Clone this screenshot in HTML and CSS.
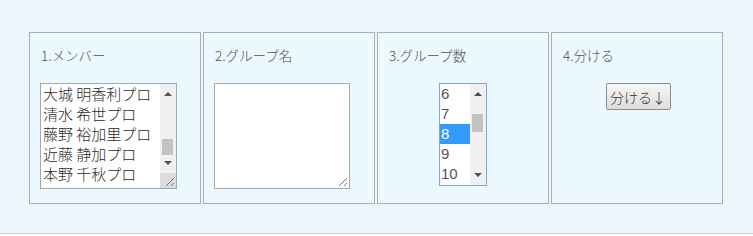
FILE: index.html
```html
<!DOCTYPE html>
<html lang="ja">
<head>
  <meta charset="UTF-8">
  <title>グループ分け</title>
  <link rel="stylesheet" href="styles.css">
</head>
<body>
  <div class="page">
    <div class="steps">
      <div class="step">
        <div class="step-title">1.メンバー</div>
        <div class="listbox members">
          <div class="list-items">
            <div class="item">大城 明香利プロ</div>
            <div class="item">清水 希世プロ</div>
            <div class="item">藤野 裕加里プロ</div>
            <div class="item">近藤 静加プロ</div>
            <div class="item">本野 千秋プロ</div>
          </div>
          <div class="scrollbar">
            <div class="arrow up"></div>
            <div class="track"><div class="thumb thumb-members"></div></div>
            <div class="arrow down"></div>
            <div class="grip"><div class="grip-lines"></div></div>
          </div>
        </div>
      </div>

      <div class="step">
        <div class="step-title">2.グループ名</div>
        <div class="textarea">
          <div class="grip-lines"></div>
        </div>
      </div>

      <div class="step center">
        <div class="step-title">3.グループ数</div>
        <div class="listbox count">
          <div class="list-items">
            <div class="item">6</div>
            <div class="item">7</div>
            <div class="item selected">8</div>
            <div class="item">9</div>
            <div class="item">10</div>
          </div>
          <div class="scrollbar">
            <div class="arrow up"></div>
            <div class="track"><div class="thumb thumb-count"></div></div>
            <div class="arrow down"></div>
          </div>
        </div>
      </div>

      <div class="step center">
        <div class="step-title">4.分ける</div>
        <button class="split-btn">分ける↓</button>
      </div>
    </div>
  </div>
</body>
</html>
```

FILE: styles.css
```css
body {
  margin: 0;
  background: #fff;
  font-family: "Noto Sans CJK JP", "Noto Sans", sans-serif;
  color: #444;
}

.page {
  height: 234px;
  background: #eef6fd;
  border-bottom: 1px solid #c9ced3;
  box-sizing: border-box;
  padding: 32px 29px 0;
}

.steps {
  display: flex;
  gap: 2px;
}

.step {
  width: 172px;
  height: 172px;
  box-sizing: border-box;
  border: 1px solid #a7afb5;
  background: #ebf8ff;
  padding: 13px 10px 0;
  display: flex;
  flex-direction: column;
}

.step.center {
  align-items: center;
}

.step-title {
  align-self: flex-start;
  font-size: 13.5px;
  font-weight: 300;
  line-height: 18px;
  padding-left: 1px;
  margin-bottom: 19px;
  color: #505050;
}

.listbox {
  display: flex;
  background: #fff;
  border: 1px solid #a5a9ad;
  box-sizing: border-box;
}

.members {
  width: 137px;
  height: 106px;
}

.count {
  width: 48px;
  height: 103px;
  border-color: #7ea6d6;
}

.list-items {
  flex: 1;
  overflow: hidden;
}

.item {
  height: 20px;
  line-height: 20px;
  white-space: nowrap;
  color: #333;
}

.members .item {
  font-size: 15px;
  font-weight: 300;
  padding-left: 2px;
  color: #2a2a2a;
}

.count .item {
  font-family: "Liberation Sans", Arial, sans-serif;
  font-size: 15px;
  padding-left: 1px;
  color: #555;
}

.item.selected {
  background: #3399ff;
  color: #fff;
}

.scrollbar {
  width: 16px;
  background: #f0f0f0;
  display: flex;
  flex-direction: column;
  align-items: center;
}

.arrow {
  width: 0;
  height: 0;
  border-left: 4px solid transparent;
  border-right: 4px solid transparent;
}

.arrow.up {
  border-bottom: 4px solid #505050;
  margin-top: 8px;
}

.arrow.down {
  border-top: 4px solid #505050;
  margin-bottom: 8px;
}

.track {
  flex: 1;
  width: 100%;
  position: relative;
}

.thumb {
  position: absolute;
  left: 2px;
  right: 3px;
  background: #c2c2c2;
}

.thumb-members {
  top: 43px;
  height: 16px;
}

.thumb-count {
  top: 18px;
  height: 18px;
}

.grip {
  width: 100%;
  height: 15px;
  background: #dcdcdc;
  position: relative;
}

.textarea {
  width: 136px;
  height: 106px;
  box-sizing: border-box;
  border: 1px solid #a5a9ad;
  background: #fff;
  position: relative;
}

.grip-lines {
  position: absolute;
  right: 2px;
  bottom: 2px;
  width: 8px;
  height: 8px;
  background-image: linear-gradient(135deg, transparent 5px, #777 5px, #777 6px, transparent 6px, transparent 8.5px, #777 8.5px, #777 9.5px, transparent 9.5px);
}

.split-btn {
  width: 65px;
  height: 27px;
  font-family: "Noto Sans CJK JP", sans-serif;
  font-size: 14px;
  font-weight: 300;
  color: #333;
  border: 1px solid #8d8d8d;
  border-radius: 2px;
  background: linear-gradient(#f6f6f6, #dedede);
  padding: 0;
  margin-left: 2px;
}
```
